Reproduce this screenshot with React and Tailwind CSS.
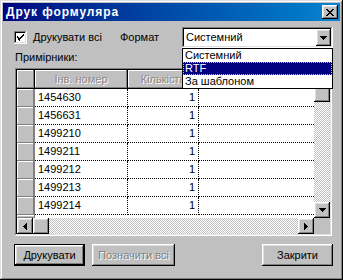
import React from "react";

const raised =
  "shadow-[inset_-1px_-1px_#000,inset_1px_1px_#fff,inset_-2px_-2px_#808080,inset_2px_2px_#dfdfdf]";
const sunken =
  "shadow-[inset_-1px_-1px_#fff,inset_1px_1px_#808080,inset_-2px_-2px_#dfdfdf,inset_2px_2px_#000]";
const cellRaised = "shadow-[inset_-1px_-1px_#808080,inset_1px_1px_#fff]";
const checker =
  "[background-image:repeating-conic-gradient(#c0c0c0_0_25%,#ffffff_0_50%)] [background-size:2px_2px]";

const Arrow = ({ dir }) => {
  const pts = {
    down: "0,0 7,0 3.5,4",
    up: "0,4 7,4 3.5,0",
    left: "4,0 4,7 0,3.5",
    right: "0,0 0,7 4,3.5",
  }[dir];
  const w = dir === "left" || dir === "right" ? 4 : 7;
  const h = dir === "left" || dir === "right" ? 7 : 4;
  return (
    <svg width={w} height={h} viewBox={`0 0 ${w} ${h}`} shapeRendering="crispEdges">
      <polygon points={pts} fill="#000" />
    </svg>
  );
};

const ScrollBtn = ({ dir }) => (
  <div className={`w-[16px] h-[16px] shrink-0 bg-[#c0c0c0] flex items-center justify-center ${raised}`}>
    {dir && <Arrow dir={dir} />}
  </div>
);

const rows = ["1454630", "1456631", "1499210", "1499211", "1499212", "1499213", "1499214"];

export default function App() {
  return (
    <div
      className={`w-[343px] h-[280px] bg-[#c0c0c0] p-[3px] flex flex-col text-[11px] text-black [font-family:'Liberation_Sans',Arial,sans-serif] shadow-[inset_-1px_-1px_#000,inset_1px_1px_#dfdfdf,inset_-2px_-2px_#808080,inset_2px_2px_#fff]`}
    >
      {/* Title bar */}
      <div className="h-[18px] flex items-center justify-between pl-[3px] pr-[2px] bg-gradient-to-r from-[#000080] to-[#1084d0]">
        <span className="text-white font-bold text-[12px] tracking-[0.9px] leading-none">Друк формуляра</span>
        <div className={`w-[16px] h-[14px] bg-[#c0c0c0] flex items-center justify-center ${raised}`}>
          <svg width="8" height="7" viewBox="0 0 8 7" shapeRendering="crispEdges">
            <path d="M0 0h2v1H0zM6 0h2v1H6zM1 1h2v1H1zM5 1h2v1H5zM2 2h4v1H2zM3 3h2v1H3zM2 4h4v1H2zM1 5h2v1H1zM5 5h2v1H5zM0 6h2v1H0zM6 6h2v1H6z" fill="#000" />
          </svg>
        </div>
      </div>

      {/* Checkbox / format row */}
      <div className="mt-[6px] flex items-center pl-[11px] h-[21px]">
        <div className={`w-[13px] h-[13px] bg-white flex items-center justify-center ${sunken}`}>
          <svg width="7" height="7" viewBox="0 0 7 7" shapeRendering="crispEdges">
            <path d="M6 0h1v1H6zM5 1h2v1H5zM0 2h1v1H0zM4 2h2v1H4zM0 3h2v1H0zM3 3h2v1H3zM1 4h3v1H1zM2 5h1v1H2zM1 5h2v1H1zM2 6h1v1H2z" fill="#000" />
          </svg>
        </div>
        <span className="ml-[6px] w-[87px]">Друкувати всі</span>
        <span className="w-[62px]">Формат</span>
        <div className="relative w-[151px] h-[21px]">
          <div className={`h-full bg-white flex items-center pl-[4px] pr-[2px] ${sunken}`}>
            <span className="flex-1">Системний</span>
            <div className={`w-[15px] h-[17px] bg-[#c0c0c0] flex items-center justify-center ${raised}`}>
              <Arrow dir="down" />
            </div>
          </div>
          {/* Open dropdown list */}
          <div className="absolute left-0 top-full w-full z-10 bg-white border border-black flex flex-col leading-[13px]">
            <div className="h-[13px] px-[2px]">Системний</div>
            <div className="h-[13px] px-[1px] bg-[#000080] text-white border border-dotted border-[#c8c87a] leading-[11px]">RTF</div>
            <div className="h-[13px] px-[2px]">За шаблоном</div>
          </div>
        </div>
      </div>

      <div className="mt-[3px] pl-[12px] h-[13px] leading-[13px]">Примірники:</div>

      {/* Grid */}
      <div className={`mt-[4px] ml-[12px] w-[317px] h-[168px] p-[2px] bg-white ${sunken}`}>
        <div className="flex flex-col h-full">
          <div className="flex h-[148px]">
            <div className="flex-1 flex flex-col bg-white overflow-hidden">
              <div className="flex h-[19px] shrink-0 bg-[#c0c0c0]">
                <div className={`w-[18px] ${cellRaised} border-r border-b border-black`} />
                <div className={`w-[93px] flex items-center justify-center text-[#8a8a8a] [text-shadow:1px_1px_0_#fff] ${cellRaised} border-r border-b border-black`}>
                  Інв. номер
                </div>
                <div className={`w-[71px] flex items-center justify-center text-[#8a8a8a] [text-shadow:1px_1px_0_#fff] ${cellRaised} border-r border-b border-black`}>
                  Кількість
                </div>
                <div className="flex-1 border-b border-black" />
              </div>
              {rows.map((r) => (
                <div key={r} className="flex h-[18px] shrink-0">
                  <div className={`w-[18px] bg-[#c0c0c0] ${cellRaised} border-r border-[#808080]`} />
                  <div className="w-[93px] flex items-center pl-[3px] border-r border-b border-dotted border-black">
                    {r}
                  </div>
                  <div className="w-[71px] flex items-center justify-end pr-[3px] border-r border-b border-dotted border-black">
                    1
                  </div>
                  <div className="flex-1 border-b border-dotted border-black" />
                </div>
              ))}
              <div className="flex flex-1">
                <div className={`w-[18px] bg-[#c0c0c0] ${cellRaised}`} />
              </div>
            </div>
            <div className="w-[16px] flex flex-col">
              <ScrollBtn dir="up" />
              <ScrollBtn />
              <div className={`flex-1 ${checker}`} />
              <ScrollBtn dir="down" />
            </div>
          </div>
          <div className="flex h-[16px]">
            <ScrollBtn dir="left" />
            <ScrollBtn />
            <div className={`flex-1 ${checker}`} />
            <ScrollBtn dir="right" />
            <div className="w-[16px] bg-[#c0c0c0]" />
          </div>
        </div>
      </div>

      {/* Buttons */}
      <div className="mt-[8px] flex items-center pl-[11px] pr-[7px] h-[22px]">
        <button className="w-[71px] h-[22px] border border-black bg-[#c0c0c0] p-0">
          <div className={`w-full h-full flex items-center justify-center ${raised}`}>Друкувати</div>
        </button>
        <button
          className={`ml-[7px] w-[83px] h-[22px] bg-[#c0c0c0] text-[#808080] [text-shadow:1px_1px_0_#fff] ${raised}`}
        >
          Позначити всі
        </button>
        <div className="flex-1" />
        <button className={`w-[71px] h-[22px] bg-[#c0c0c0] ${raised}`}>Закрити</button>
      </div>
    </div>
  );
}
